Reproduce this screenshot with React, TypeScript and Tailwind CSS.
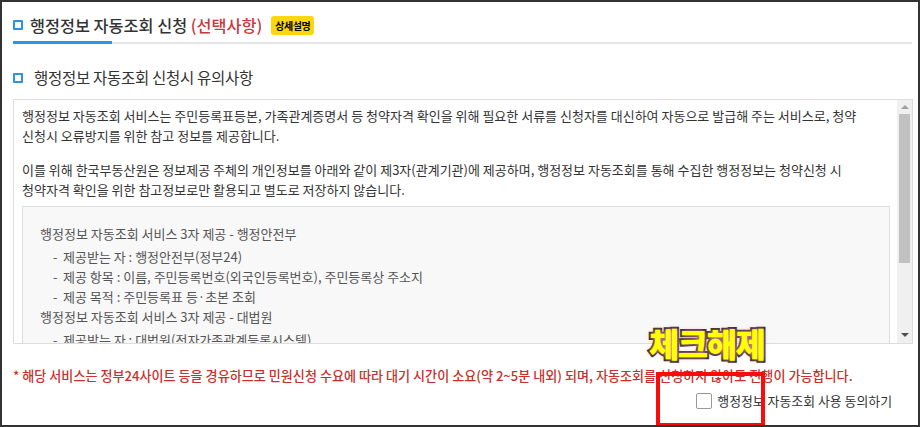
import React from 'react';

const FONT = "font-['Noto_Sans_CJK_KR','Noto_Sans',sans-serif]";

const introLines = [
  [
    '행정정보 자동조회 서비스는 주민등록표등본, 가족관계증명서 등 청약자격 확인을 위해 필요한 서류를 신청자를 대신하여 자동으로 발급해 주는 서비스로, 청약',
    '신청시 오류방지를 위한 참고 정보를 제공합니다.',
  ],
  [
    '이를 위해 한국부동산원은 정보제공 주체의 개인정보를 아래와 같이 제3자(관계기관)에 제공하며, 행정정보 자동조회를 통해 수집한 행정정보는 청약신청 시',
    '청약자격 확인을 위한 참고정보로만 활용되고 별도로 저장하지 않습니다.',
  ],
];

const providers = [
  {
    title: '행정정보 자동조회 서비스 3자 제공 - 행정안전부',
    items: [
      '제공받는 자 : 행정안전부(정부24)',
      '제공 항목 : 이름, 주민등록번호(외국인등록번호), 주민등록상 주소지',
      '제공 목적 : 주민등록표 등·초본 조회',
    ],
  },
  {
    title: '행정정보 자동조회 서비스 3자 제공 - 대법원',
    items: [
      '제공받는 자 : 대법원(전자가족관계등록시스템)',
      '제공 항목 : 이름, 주민등록번호, 가족관계등록부',
      '제공 목적 : 가족관계증명서 조회',
    ],
  },
];

function SquareIcon() {
  return <span className="block w-[10px] h-[10px] border-2 border-[#2a93e6] rounded-[1px] shrink-0" />;
}

function Scrollbar() {
  return (
    <div className="w-[15px] shrink-0 bg-[#f0f0f0] flex flex-col">
      <div className="h-[14px] flex items-center justify-center">
        <span className="block w-0 h-0 border-x-[4px] border-x-transparent border-b-[4px] border-b-[#a0a0a0]" />
      </div>
      <div className="h-[149px] ml-[2px] w-[11px] bg-[#c1c1c1]" />
      <div className="flex-1" />
      <div className="h-[16px] flex items-center justify-center">
        <span className="block w-0 h-0 border-x-[4px] border-x-transparent border-t-[4px] border-t-[#505050]" />
      </div>
    </div>
  );
}

export default function App() {
  return (
    <div className={`${FONT} relative w-[920px] h-[427px] box-border border-2 border-[#333] bg-white overflow-hidden`}>
      <div className="pl-[11px] pr-[5px] pt-[7px]">
        {/* Section title */}
        <div className="h-[32px] flex items-center">
          <SquareIcon />
          <h2 className="ml-[7px] text-[16.3px] font-medium text-[#333] whitespace-nowrap">
            행정정보 자동조회 신청 <span className="text-[#c9363b]">(선택사항)</span>
          </h2>
          <span className="ml-[9px] h-[19px] px-[4px] flex items-center rounded-[3px] bg-[#fcd60f] text-[10px] tracking-[-0.5px] font-bold text-black">
            상세설명
          </span>
        </div>
        <div className="flex items-end h-[3px] mr-[1px]">
          <div className="w-[99px] h-[3px] bg-[#2b95e9]" />
          <div className="flex-1 h-[2px] bg-[#e6e6e6]" />
        </div>

        {/* Notice title */}
        <div className="mt-[19px] h-[30px] flex items-center">
          <SquareIcon />
          <h3 className="ml-[11px] text-[15.5px] tracking-[-0.3px] text-[#333] whitespace-nowrap">
            행정정보 자동조회 신청시 유의사항
          </h3>
        </div>

        {/* Scroll box */}
        <div className="mt-[6px] h-[245px] border border-[#dddddd] flex">
          <div className="flex-1 overflow-hidden pl-[8px] pr-[7px] pt-[6px]">
            {introLines.map((para, i) => (
              <div key={i} className={i > 0 ? 'mt-[14px]' : ''}>
                {para.map((line) => (
                  <div key={line} className="text-[13px] leading-[20px] text-[#333] whitespace-nowrap">
                    {line}
                  </div>
                ))}
              </div>
            ))}
            <div className="mt-[6px] border border-[#dddddd] bg-[#f8f8f8] pl-[17px] pt-[17px] pb-[16px] text-[13px] leading-[20px] text-[#555]">
              {providers.map((p) => (
                <div key={p.title}>
                  <div className="whitespace-nowrap mb-[3px]">{p.title}</div>
                  {p.items.map((item) => (
                    <div key={item} className="flex pl-[13px] whitespace-nowrap">
                      <span className="w-[10px] shrink-0">-</span>
                      <span>{item}</span>
                    </div>
                  ))}
                </div>
              ))}
            </div>
          </div>
          <Scrollbar />
        </div>

        {/* Note */}
        <p className="mt-[22px] text-[13.1px] leading-[20px] font-medium text-[#c9302c] whitespace-nowrap">
          * 해당 서비스는 정부24사이트 등을 경유하므로 민원신청 수요에 따라 대기 시간이 소요(약 2~5분 내외) 되며, 자동조회를 신청하지 않아도 진행이 가능합니다.
        </p>

        {/* Agreement */}
        <div className="mt-[5px] mr-[21px] flex justify-end">
          <label className="flex items-center h-[20px] gap-[5px] text-[12.9px] text-[#333] whitespace-nowrap">
            <span className="block w-[16px] h-[16px] border border-[#9a9a9a] rounded-[2px] bg-white" />
            행정정보 자동조회 사용 동의하기
          </label>
        </div>
      </div>

      {/* Annotation overlay */}
      <div className="absolute left-[647px] top-[319px] text-[33px] leading-[44px] font-black tracking-[-1.5px] text-[#ffff00] [-webkit-text-stroke:4px_#222] [paint-order:stroke_fill] [text-shadow:0_0_5px_#ff9db0]">
        체크해제
      </div>
      <div className="absolute left-[654px] top-[370px] w-[109px] h-[55px] border-4 border-[#ff0a0a]" />
    </div>
  );
}
